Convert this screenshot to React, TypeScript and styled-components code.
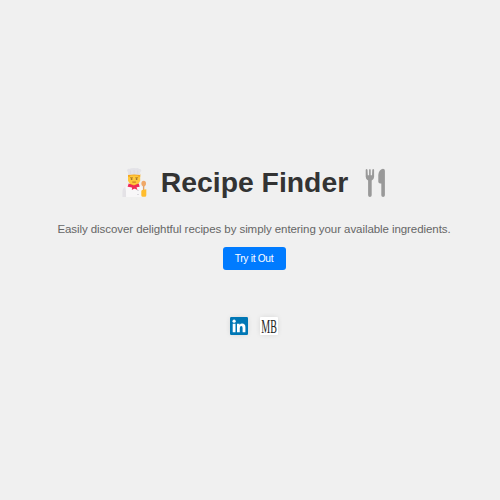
import React from "react";
import styled, { createGlobalStyle } from "styled-components";

const GlobalStyle = createGlobalStyle`
  body {
    margin: 0;
    background: #f0f0f0;
    font-family: "Liberation Sans", Arial, sans-serif;
  }
`;

const Page = styled.main`
  box-sizing: border-box;
  height: 500px;
  padding: 164px 0 0 8px;
  display: flex;
  flex-direction: column;
  align-items: center;
  background: #f0f0f0;
  overflow: hidden;
`;

const Title = styled.h1`
  margin: 0;
  height: 37px;
  display: flex;
  align-items: center;
  color: #333;
  font-size: 28.35px;
  line-height: 37px;
  white-space: nowrap;
`;

const TitleText = styled.span`
  margin: 0 15px 0 12px;
`;

const Emoji = styled.svg`
  display: block;
  flex: none;
`;

const Tagline = styled.p`
  margin: 20px 0 0;
  height: 16px;
  line-height: 16px;
  font-size: 11.5px;
  letter-spacing: -0.07px;
  color: #666;
  white-space: nowrap;
`;

const TryButton = styled.button`
  margin: 10px 0 0;
  width: 63px;
  height: 23px;
  padding: 0;
  border: 0;
  border-radius: 3px;
  background: #007bff;
  color: #fff;
  font-family: inherit;
  font-size: 10.2px;
  letter-spacing: -0.3px;
  line-height: 22px;
  cursor: pointer;
`;

const Links = styled.nav`
  margin-top: 47px;
  display: flex;
  gap: 12px;
`;

const LogoLink = styled.a`
  display: block;
  width: 18px;
  height: 18px;
  border-radius: 2px;
  box-shadow: 0 0 5px rgba(0, 0, 0, 0.1);

  svg {
    display: block;
    overflow: visible;
  }
`;

function Cook() {
  return (
    <Emoji width="28" height="32" viewBox="0 0 28 32" role="img" aria-label="Cook">
      <path d="M1.300 30v-5q0-5 4.500-5.800l4-1h6l3.500.8q2 .6 2 3v8z" fill="#f8f7f8" />
      <path d="M1.300 30v-5q0-4 3-5.200 1 4 .8 10.200z" fill="#e4e2e6" />
      <path d="M9 15h8v4l-4 3-4-3z" fill="#f3a51d" />
      <path d="M7 7.500h12.200v6q-1 4-6.100 4.500Q8 17.500 7 13.500z" fill="#ffc83d" />
      <path d="M7 7h12.200v2.700h-1.700l-1-1.200H9.700l-1 1.200H7z" fill="#f6a51c" />
      <path d="M9 10.700h2.900M14.300 10.700h2.900" stroke="#b47718" strokeWidth=".8" />
      <circle cx="10.600" cy="12" r=".85" fill="#805b30" />
      <circle cx="15.600" cy="12" r=".85" fill="#805b30" />
      <path d="M11.300 15.100h3.600" fill="none" stroke="#b66b17" strokeWidth=".9" />
      <path d="M7 8V5Q5.800 4.500 6.200 3.100q.4-1.600 2.300-1.200Q9.500 1 11.100 1.300q2-.7 4 0 2-.6 3 .6 2-.1 2.200 1.300Q20.500 4.700 19.200 5v3Q13.100 6.800 7 8z" fill="#e3e2e7" />
      <path d="M9.500 3.500V7M13.100 3v3.700M16.700 3.500V7" stroke="#d7d5de" strokeWidth=".6" />
      <path d="m7.700 16.600 5.200 2 4.800-2 1 3.200-3.200.4 1 2.700-3-1.500-2.700 1.600.4-2.600-4.600-.7z" fill="#f02b58" />
      <circle cx="17" cy="23.500" r=".6" fill="#b8b5bf" />
      <circle cx="17" cy="27.500" r=".6" fill="#b8b5bf" />
      <path d="M22.700 18v6" stroke="#d99355" strokeWidth="1.100" />
      <ellipse cx="22.700" cy="16.600" rx="2.300" ry="2.800" fill="#f0a868" />
      <path d="M20.300 24.200q0-1.700 2-1.500l3-.5v6q0 1.600-1.500 1.600h-2q-1.500 0-1.500-1.600z" fill="#ffbd2e" />
    </Emoji>
  );
}

function ForkAndKnife() {
  return (
    <Emoji width="24" height="32" viewBox="0 0 24 32" role="img" aria-label="Fork and knife">
      <path
        d="M2.700 2.800q.9-1.500 1.800 0l.3 5.400h1.300V2.800q.8-1.600 1.600 0v5.400H9l.3-5.400q.9-1.500 1.800 0v7q0 2.700-2.400 3.700v14.800q-.1 1.700-1.800 1.700t-1.800-1.700V13.500Q2.700 12.500 2.700 9.800z"
        fill="#999"
      />
      <path
        d="M19.900 1.700q2 0 2 2v24.600q-.1 1.700-1.800 1.700t-1.800-1.700V16.500q-3 0-3-2V8q.5-5.500 4.600-6.300z"
        fill="#999"
      />
    </Emoji>
  );
}

function LinkedInLogo() {
  return (
    <svg width="18" height="18" viewBox="0 0 18 18" aria-hidden="true">
      <rect width="18" height="18" rx="1.200" fill="#0077b5" />
      <circle cx="4.100" cy="4.200" r="1.600" fill="#fff" />
      <path
        d="M2.700 6.800h2.800v8.400H2.700zM7 6.800h2.600v1.100q.8-1.300 2.500-1.300 3.300 0 3.300 3.700v4.900h-2.800v-4.300q0-2-1.300-2-1.500 0-1.500 2v4.300H7z"
        fill="#fff"
      />
    </svg>
  );
}

const Monogram = styled.text`
  font-family: "Liberation Serif", serif;
  font-size: 19.5px;
  fill: #222;
`;

function MBLogo() {
  return (
    <svg width="18" height="18" viewBox="0 0 18 18" aria-hidden="true">
      <rect width="18" height="18" rx="1" fill="#fff" />
      <Monogram x="1.300" y="15.500" textLength="15.600" lengthAdjust="spacingAndGlyphs">
        MB
      </Monogram>
    </svg>
  );
}

export default function App() {
  return (
    <>
      <GlobalStyle />
      <Page>
        <Title>
          <Cook />
          <TitleText>Recipe Finder</TitleText>
          <ForkAndKnife />
        </Title>
        <Tagline>
          Easily discover delightful recipes by simply entering your available ingredients.
        </Tagline>
        <TryButton type="button">Try it Out</TryButton>
        <Links>
          <LogoLink href="#" aria-label="LinkedIn">
            <LinkedInLogo />
          </LogoLink>
          <LogoLink href="#" aria-label="Portfolio">
            <MBLogo />
          </LogoLink>
        </Links>
      </Page>
    </>
  );
}
